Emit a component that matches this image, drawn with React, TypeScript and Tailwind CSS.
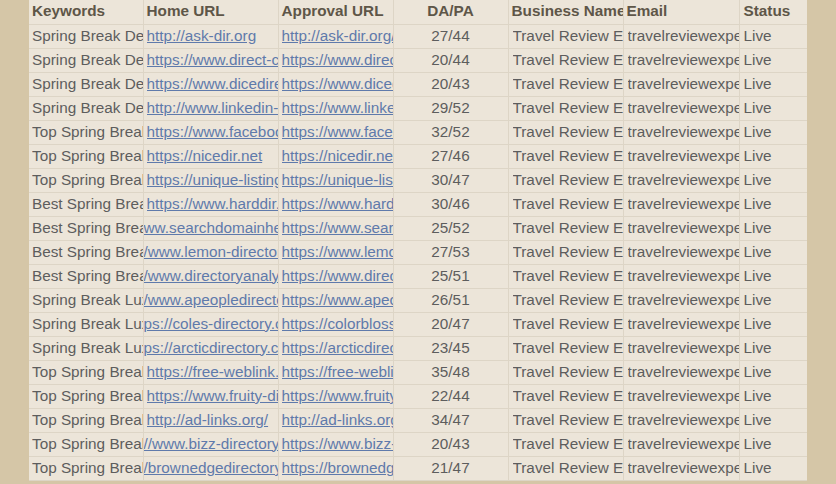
import React from "react";

type Row = {
  kw: string;
  home: string;
  homeCut?: boolean; // starts clipped on the left
  approval: string;
  dapa: string;
};

const rows: Row[] = [
  { kw: "Spring Break Destinations", home: "http://ask-dir.org", approval: "http://ask-dir.org/", dapa: "27/44" },
  { kw: "Spring Break Destinations", home: "https://www.direct-chicago.com", approval: "https://www.directchicago.com", dapa: "20/44" },
  { kw: "Spring Break Destinations", home: "https://www.dicedirectory.com", approval: "https://www.dicedirectory.com", dapa: "20/43" },
  { kw: "Spring Break Destinations", home: "http://www.linkedin-directory.com", approval: "https://www.linkedin-directory.com", dapa: "29/52" },
  { kw: "Top Spring Break Places", home: "https://www.facebook.com", approval: "https://www.facebook.com", dapa: "32/52" },
  { kw: "Top Spring Break Places", home: "https://nicedir.net", approval: "https://nicedir.net/", dapa: "27/46" },
  { kw: "Top Spring Break Places", home: "https://unique-listing.com", approval: "https://unique-listing.com", dapa: "30/47" },
  { kw: "Best Spring Break Spots", home: "https://www.harddir.com", approval: "https://www.harddir.com", dapa: "30/46" },
  { kw: "Best Spring Break Spots", home: "ww.searchdomainhelp.com", homeCut: true, approval: "https://www.searchdomainhelp.com", dapa: "25/52" },
  { kw: "Best Spring Break Spots", home: "/www.lemon-directory.com", homeCut: true, approval: "https://www.lemon-directory.com", dapa: "27/53" },
  { kw: "Best Spring Break Spots", home: "/www.directoryanalytic.com", homeCut: true, approval: "https://www.directoryanalytic.com", dapa: "25/51" },
  { kw: "Spring Break Luxury", home: "/www.apeopledirectory.com", homeCut: true, approval: "https://www.apeopledirectory.com", dapa: "26/51" },
  { kw: "Spring Break Luxury", home: "ps://coles-directory.com", homeCut: true, approval: "https://colorblossom.com", dapa: "20/47" },
  { kw: "Spring Break Luxury", home: "ps://arcticdirectory.com", homeCut: true, approval: "https://arcticdirectory.com", dapa: "23/45" },
  { kw: "Top Spring Break Places", home: "https://free-weblink.com", approval: "https://free-weblink.com", dapa: "35/48" },
  { kw: "Top Spring Break Places", home: "https://www.fruity-directory.com", approval: "https://www.fruityfy.com", dapa: "22/44" },
  { kw: "Top Spring Break Places", home: "http://ad-links.org/", approval: "http://ad-links.org/", dapa: "34/47" },
  { kw: "Top Spring Break Places", home: "//www.bizz-directory.com", homeCut: true, approval: "https://www.bizz-directory.com", dapa: "20/43" },
  { kw: "Top Spring Break Places", home: "/brownedgedirectory.com", homeCut: true, approval: "https://brownedgedirectory.com", dapa: "21/47" },
];

const cell =
  "h-[24px] border border-[#ddd5c6] overflow-hidden whitespace-nowrap p-0 align-middle";
const link = "text-[#5f7aab] underline decoration-[#5f7aab]";

export default function App() {
  return (
    <div
      className="w-[836px] h-[484px] overflow-hidden bg-[#d5c6a7] pl-[29px] text-[15.3px] text-[#5d5d5d]"
      style={{ fontFamily: '"Liberation Sans", Arial, sans-serif' }}
    >
      <table className="table-fixed border-collapse w-[778px] bg-[#ece5d9]">
        <colgroup>
          <col className="w-[114px]" />
          <col className="w-[135px]" />
          <col className="w-[115px]" />
          <col className="w-[115px]" />
          <col className="w-[115px]" />
          <col className="w-[116px]" />
          <col className="w-[68px]" />
        </colgroup>
        <thead>
          <tr className="font-bold text-[#5e5648] text-left">
            <th className={`${cell} border-t-0 border-l-0 pl-[3px]`}>Keywords</th>
            <th className={`${cell} border-t-0 pl-[3px]`}>Home URL</th>
            <th className={`${cell} border-t-0 pl-[3px]`}>Approval URL</th>
            <th className={`${cell} border-t-0 text-center`}>DA/PA</th>
            <th className={`${cell} border-t-0 pl-[3px]`}>Business Name</th>
            <th className={`${cell} border-t-0 pl-[3px]`}>Email</th>
            <th className={`${cell} border-t-0 border-r-0 pl-[4px]`}>Status</th>
          </tr>
        </thead>
        <tbody>
          {rows.map((r, i) => (
            <tr key={i}>
              <td className={`${cell} border-l-0 pl-[3px]`}>
                <div className="overflow-hidden">{r.kw}</div>
              </td>
              <td className={`${cell} ${r.homeCut ? "pl-0" : "pl-[3px]"}`}>
                <div className="overflow-hidden">
                  <span className={link}>{r.home}</span>
                </div>
              </td>
              <td className={`${cell} pl-[3px]`}>
                <div className="overflow-hidden">
                  <span className={link}>{r.approval}</span>
                </div>
              </td>
              <td className={`${cell} text-center`}>{r.dapa}</td>
              <td className={`${cell} pl-[4px]`}>
                <div className="overflow-hidden">Travel Review Expert</div>
              </td>
              <td className={`${cell} pl-[4px]`}>
                <div className="overflow-hidden">travelreviewexpert@gmail.com</div>
              </td>
              <td className={`${cell} border-r-0 pl-[4px]`}>Live</td>
            </tr>
          ))}
        </tbody>
      </table>
    </div>
  );
}
